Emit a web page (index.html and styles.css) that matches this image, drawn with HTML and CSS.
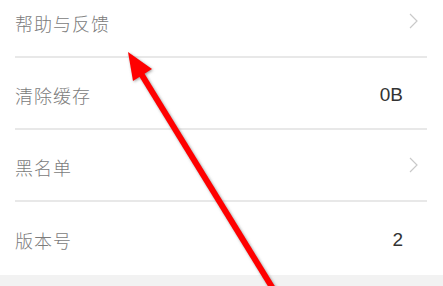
FILE: index.html
```html
<!DOCTYPE html>
<html lang="zh">
<head>
<meta charset="utf-8">
<link rel="stylesheet" href="styles.css">
</head>
<body>
<div class="page">
  <ul class="list">
    <li class="row"><span class="label">帮助与反馈</span><span class="chev"><svg width="9" height="16" viewBox="0 0 9 16"><path d="M1 1 L8 8 L1 15" fill="none" stroke="#c9c9c9" stroke-width="1.2"/></svg></span></li>
    <li class="row"><span class="label">清除缓存</span><span class="value">0B</span></li>
    <li class="row"><span class="label">黑名单</span><span class="chev"><svg width="9" height="16" viewBox="0 0 9 16"><path d="M1 1 L8 8 L1 15" fill="none" stroke="#c9c9c9" stroke-width="1.2"/></svg></span></li>
    <li class="row last"><span class="label">版本号</span><span class="value">2</span></li>
  </ul>
  <div class="footer"></div>
  <svg class="arrow" width="443" height="286" viewBox="0 0 443 286">
    <g class="arrow-g">
      <line x1="140" y1="72" x2="275" y2="292" stroke="#ff0000" stroke-width="6"/>
      <polygon points="128,52 152,69 133,81" fill="#ff0000"/>
    </g>
  </svg>
</div>
</body>
</html>
```
FILE: styles.css
```css
html, body {
  margin: 0;
  padding: 0;
  background: #ffffff;
}
.page {
  position: relative;
  width: 443px;
  height: 286px;
  overflow: hidden;
}
.list {
  list-style: none;
  margin: -14px 0 0 0;
  padding: 0 16px 0 15px;
}
.row {
  display: flex;
  align-items: center;
  justify-content: space-between;
  height: 67px;
  padding-top: 3px;
  box-sizing: content-box;
  border-bottom: 2px solid #e8e8e8;
}
.row.last {
  border-bottom: none;
  height: 70px;
}
.label {
  font-family: "Noto Sans CJK SC", "Noto Sans", sans-serif;
  font-size: 18px;
  font-weight: 300;
  letter-spacing: 1px;
  color: #7b7b7b;
}
.value {
  font-family: "Liberation Sans", Arial, sans-serif;
  font-size: 19px;
  color: #333333;
  margin-right: 24px;
}
.chev {
  display: flex;
  margin-right: 9px;
  margin-top: -3px;
}
.footer {
  height: 20px;
  background: #f2f2f2;
}
.arrow {
  position: absolute;
  left: 0;
  top: 0;
}
.arrow-g {
  filter: drop-shadow(1px 1px 1.5px rgba(90, 90, 90, 0.6));
}
```
